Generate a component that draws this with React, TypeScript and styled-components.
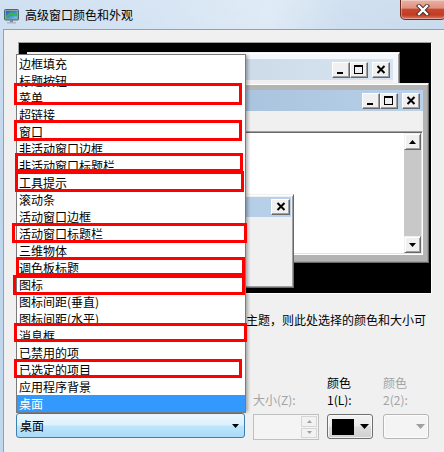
import React from "react";
import styled, { createGlobalStyle } from "styled-components";

const GlobalStyle = createGlobalStyle`
  html, body { margin: 0; padding: 0; background: #f0f0f0; }
  body { font-family: "Noto Sans CJK SC", "Noto Sans", sans-serif; font-size: 12px; color: #000; }
  * { box-sizing: border-box; }
`;

const Frame = styled.div`
  position: relative;
  width: 444px;
  height: 452px;
  overflow: hidden;
  display: flex;
  flex-direction: column;
  background:
    linear-gradient(180deg, rgba(255, 255, 255, 0.3) 0%, rgba(255, 255, 255, 0) 45%),
    linear-gradient(100deg, #bcd4ec 0%, #c6daef 30%, #d3e3f2 52%, #bdd3ea 66%, #b3cbe5 100%);
`;

const TitleBar = styled.div`
  height: 29px;
  flex: 0 0 29px;
  display: flex;
  align-items: flex-start;
`;

const AppIcon = styled.div`
  width: 16px;
  height: 16px;
  margin: 8px 0 0 4px;
`;

const TitleText = styled.div`
  margin: 6px 0 0 5px;
  line-height: 18px;
  font-size: 12px;
  color: #000;
  white-space: nowrap;
`;

const CloseButton = styled.div`
  margin-left: auto;
  margin-right: -2px;
  width: 46px;
  height: 20px;
  border: 1px solid #6b2b20;
  border-top: none;
  border-radius: 0 0 5px 5px;
  background: linear-gradient(180deg, #eab0a3 0%, #de9281 42%, #c8472e 50%, #c23b22 78%, #d77a63 100%);
  box-shadow: inset 0 0 0 1px rgba(255, 255, 255, 0.35);
  display: flex;
  align-items: center;
  justify-content: center;
`;

const Client = styled.div`
  flex: 1;
  margin-left: 3px;
  background: #f0f0f0;
  border-left: 1px solid #8fa1b6;
  border-top: 1px solid #8fa1b6;
  padding-top: 12px;
`;

const Preview = styled.div`
  position: relative;
  margin-left: 14px;
  width: 414px;
  height: 252px;
  background: #000;
  border: 1px solid;
  border-color: #a0a0a0 #ffffff #ffffff #a0a0a0;
  overflow: hidden;
`;

const Win = styled.div<{ $l: number; $t: number; $w: number; $h: number; $frame: string; $pad: string }>`
  position: absolute;
  left: ${(p) => p.$l}px;
  top: ${(p) => p.$t}px;
  width: ${(p) => p.$w}px;
  height: ${(p) => p.$h}px;
  background: ${(p) => p.$frame};
  border: 1px solid;
  border-color: #f0f0f0 #696969 #696969 #f0f0f0;
  box-shadow: inset 1px 1px #ffffff, inset -1px -1px #a0a0a0;
  padding: ${(p) => p.$pad};
  display: flex;
  flex-direction: column;
`;

const Caption = styled.div<{ $from: string; $to: string; $h: number; $pr: number }>`
  height: ${(p) => p.$h}px;
  flex: 0 0 ${(p) => p.$h}px;
  background: linear-gradient(90deg, ${(p) => p.$from}, ${(p) => p.$to});
  display: flex;
  align-items: center;
  justify-content: flex-end;
  padding-right: ${(p) => p.$pr}px;
`;

const CapButton = styled.div<{ $gap?: number; $w?: number }>`
  width: ${(p) => p.$w ?? 18}px;
  height: 16px;
  margin-left: ${(p) => p.$gap ?? 0}px;
  background: #f0f0f0;
  border: 1px solid;
  border-color: #ffffff #696969 #696969 #ffffff;
  box-shadow: inset -1px -1px #a0a0a0;
  display: flex;
  align-items: center;
  justify-content: center;
`;

const MenuBand = styled.div`
  height: 20px;
  flex: 0 0 20px;
  background: #f0f0f0;
`;

const TextPane = styled.div`
  height: 124px;
  flex: 0 0 124px;
  background: #ffffff;
  border: 1px solid;
  border-color: #a0a0a0 #ffffff #ffffff #a0a0a0;
  box-shadow: inset 1px 1px #696969, inset -1px -1px #e3e3e3;
  padding: 1px;
  display: flex;
  justify-content: flex-end;
`;

const ScrollBar = styled.div`
  width: 17px;
  display: flex;
  flex-direction: column;
  background: #c8c8c8;
`;

const ScrollButton = styled.div`
  width: 17px;
  height: 17px;
  background: #f0f0f0;
  border: 1px solid;
  border-color: #f0f0f0 #696969 #696969 #f0f0f0;
  box-shadow: inset 1px 1px #ffffff, inset -1px -1px #a0a0a0;
  display: flex;
  align-items: center;
  justify-content: center;
`;

const ScrollTrack = styled.div`
  flex: 1;
`;

const MsgBody = styled.div`
  flex: 1;
  background: #f0f0f0;
`;

const Description = styled.div`
  margin-top: 18px;
  padding-left: 242px;
  height: 16px;
  line-height: 16px;
  font-size: 12px;
  white-space: nowrap;
`;

const ControlsRow = styled.div`
  margin-top: 46px;
  padding-left: 12px;
  display: flex;
  align-items: flex-start;
`;

const ItemColumn = styled.div`
  width: 229px;
  padding-top: 39px;
`;

const FieldColumn = styled.div<{ $w: number; $gap: number }>`
  width: ${(p) => p.$w}px;
  margin-left: ${(p) => p.$gap}px;
  display: flex;
  flex-direction: column;
`;

const LabelStack = styled.div<{ $disabled?: boolean }>`
  height: 34px;
  display: flex;
  flex-direction: column;
  justify-content: flex-end;
  color: ${(p) => (p.$disabled ? "#a3a3a3" : "#000")};
  font-size: 12px;
`;

const LabelLine = styled.div`
  line-height: 17px;
  height: 17px;
  white-space: nowrap;
`;

const Combo = styled.div`
  height: 25px;
  border: 1px solid #3c7fb1;
  border-radius: 3px;
  background: linear-gradient(180deg, #ecf7fd 0%, #dbf1fc 48%, #bee6fd 52%, #a9dbf6 100%);
  display: flex;
  align-items: center;
  justify-content: space-between;
  padding: 0 5px 0 3px;
  font-size: 12px;
`;

const Spinner = styled.div`
  margin-top: 6px;
  height: 26px;
  border: 1px solid #bfbfbf;
  background: #f4f4f4;
  display: flex;
  justify-content: flex-end;
  padding: 1px;
`;

const SpinColumn = styled.div`
  width: 16px;
  display: flex;
  flex-direction: column;
  gap: 1px;
`;

const SpinHalf = styled.div`
  flex: 1;
  border: 1px solid #d6d6d6;
  background: #f2f2f2;
  display: flex;
  align-items: center;
  justify-content: center;
`;

const ColorButton = styled.div<{ $disabled?: boolean }>`
  margin-top: 6px;
  height: 25px;
  border: 1px solid ${(p) => (p.$disabled ? "#b5b5b5" : "#707070")};
  border-radius: 3px;
  background: ${(p) =>
    p.$disabled
      ? "#f4f4f4"
      : "linear-gradient(180deg, #f2f2f2 0%, #ebebeb 48%, #dddddd 52%, #cfcfcf 100%)"};
  box-shadow: inset 0 0 0 1px rgba(255, 255, 255, 0.7);
  display: flex;
  align-items: center;
  padding: 0 3px 0 4px;
  justify-content: space-between;
`;

const Swatch = styled.div`
  width: 22px;
  height: 16px;
  background: #000;
`;

const DropList = styled.div`
  position: absolute;
  left: 16px;
  top: 54px;
  width: 230px;
  height: 359px;
  background: #fff;
  border: 1px solid #7a7a7a;
  box-shadow: 3px 0 3px -1px rgba(0, 0, 0, 0.3);
  z-index: 5;
`;

const ListItem = styled.div<{ $selected?: boolean }>`
  height: 17px;
  line-height: 17px;
  padding-left: 2px;
  font-size: 12px;
  white-space: nowrap;
  background: ${(p) => (p.$selected ? "#3399ff" : "transparent")};
  color: ${(p) => (p.$selected ? "#fff" : "#000")};
`;

const RedMark = styled.div<{ $l: number; $t: number; $w: number; $h: number }>`
  position: absolute;
  left: ${(p) => p.$l}px;
  top: ${(p) => p.$t}px;
  width: ${(p) => p.$w}px;
  height: ${(p) => p.$h}px;
  border: 3px solid #ff0000;
  z-index: 10;
  pointer-events: none;
`;

const items = [
  "边框填充",
  "标题按钮",
  "菜单",
  "超链接",
  "窗口",
  "非活动窗口边框",
  "非活动窗口标题栏",
  "工具提示",
  "滚动条",
  "活动窗口边框",
  "活动窗口标题栏",
  "三维物体",
  "调色板标题",
  "图标",
  "图标间距(垂直)",
  "图标间距(水平)",
  "消息框",
  "已禁用的项",
  "已选定的项目",
  "应用程序背景",
  "桌面",
];

const marks: [number, number, number, number][] = [
  [14, 83, 242, 105],
  [14, 120, 242, 141],
  [15, 153, 243, 172],
  [15, 171, 244, 192],
  [12, 223, 247, 243],
  [16, 257, 245, 276],
  [13, 275, 245, 295],
  [14, 323, 247, 342],
  [14, 359, 242, 378],
];

const MonitorIcon = () => (
  <svg width="16" height="16" viewBox="0 0 16 16">
    <defs>
      <linearGradient id="scr" x1="0" y1="0" x2="1" y2="1">
        <stop offset="0" stopColor="#2a62c9" />
        <stop offset="0.5" stopColor="#2f8fd8" />
        <stop offset="1" stopColor="#6fd0e8" />
      </linearGradient>
    </defs>
    <rect x="0.5" y="1.5" width="14" height="10.5" rx="1" fill="#8f9dab" stroke="#56626e" strokeWidth="1" />
    <rect x="2" y="3" width="11" height="7.5" fill="url(#scr)" />
    <polygon points="2,8 7,4 13,6 13,8.5 7,6.5 2,10.5" fill="#3fb24a" />
    <rect x="6" y="12" width="3" height="2" fill="#7d8995" />
    <rect x="3" y="14" width="9" height="1.5" fill="#a9b4bf" />
  </svg>
);

const CloseGlyph = () => (
  <svg width="14" height="12" viewBox="0 0 14 12">
    <path d="M3 2 L11 10 M11 2 L3 10" stroke="#4a2a25" strokeWidth="4.2" strokeLinecap="square" />
    <path d="M3 2 L11 10 M11 2 L3 10" stroke="#ffffff" strokeWidth="2.4" strokeLinecap="square" />
  </svg>
);

type GlyphKind = "min" | "max" | "close";
const CapGlyph = ({ kind }: { kind: GlyphKind }) => (
  <svg width="16" height="14" viewBox="0 0 16 14" shapeRendering="crispEdges">
    {kind === "min" && <rect x="4" y="9" width="6" height="2" fill="#000" />}
    {kind === "max" && (
      <g fill="#000">
        <rect x="3" y="2" width="9" height="2" />
        <rect x="3" y="2" width="1" height="9" />
        <rect x="11" y="2" width="1" height="9" />
        <rect x="3" y="10" width="9" height="1" />
      </g>
    )}
    {kind === "close" && (
      <path d="M4.5 3 L11.5 10 M11.5 3 L4.5 10" stroke="#000" strokeWidth="2" shapeRendering="auto" />
    )}
  </svg>
);

const Tri = ({ dir, w, h, color }: { dir: "up" | "down"; w: number; h: number; color: string }) => (
  <svg width={w} height={h} viewBox={`0 0 ${w} ${h}`}>
    {dir === "up" ? (
      <polygon points={`0,${h} ${w},${h} ${w / 2},0`} fill={color} />
    ) : (
      <polygon points={`0,0 ${w},0 ${w / 2},${h}`} fill={color} />
    )}
  </svg>
);

export default function App() {
  return (
    <>
      <GlobalStyle />
      <Frame>
        <TitleBar>
          <AppIcon>
            <MonitorIcon />
          </AppIcon>
          <TitleText>高级窗口颜色和外观</TitleText>
          <CloseButton>
            <CloseGlyph />
          </CloseButton>
        </TitleBar>
        <Client>
          <Preview>
            <Win $l={8} $t={9} $w={373} $h={150} $frame="#f4f7fc" $pad="6px">
              <Caption $from="#bfcddb" $to="#d7e4f2" $h={21} $pr={3}>
                <CapButton>
                  <CapGlyph kind="min" />
                </CapButton>
                <CapButton>
                  <CapGlyph kind="max" />
                </CapButton>
                <CapButton $gap={4}>
                  <CapGlyph kind="close" />
                </CapButton>
              </Caption>
              <MenuBand />
            </Win>
            <Win $l={18} $t={40} $w={392} $h={180} $frame="#b4b4b4" $pad="6px 5px 7px 6px">
              <Caption $from="#99b4d1" $to="#b9d1ea" $h={21} $pr={3}>
                <CapButton>
                  <CapGlyph kind="min" />
                </CapButton>
                <CapButton>
                  <CapGlyph kind="max" />
                </CapButton>
                <CapButton $gap={4}>
                  <CapGlyph kind="close" />
                </CapButton>
              </Caption>
              <MenuBand />
              <TextPane>
                <ScrollBar>
                  <ScrollButton>
                    <Tri dir="up" w={7} h={4} color="#000" />
                  </ScrollButton>
                  <ScrollTrack />
                  <ScrollButton>
                    <Tri dir="down" w={7} h={4} color="#000" />
                  </ScrollButton>
                </ScrollBar>
              </TextPane>
            </Win>
            <Win $l={91} $t={151} $w={184} $h={94} $frame="#f0f0f0" $pad="2px">
              <Caption $from="#a9c4e0" $to="#b9d1ea" $h={20} $pr={1}>
                <CapButton $w={19}>
                  <CapGlyph kind="close" />
                </CapButton>
              </Caption>
              <MsgBody />
            </Win>
          </Preview>
          <Description>主题，则此处选择的颜色和大小可</Description>
          <ControlsRow>
            <ItemColumn>
              <Combo>
                <span>桌面</span>
                <Tri dir="down" w={7} h={4} color="#000" />
              </Combo>
            </ItemColumn>
            <FieldColumn $w={66} $gap={8}>
              <LabelStack $disabled>
                <LabelLine>大小(Z):</LabelLine>
              </LabelStack>
              <Spinner>
                <SpinColumn>
                  <SpinHalf>
                    <Tri dir="up" w={5} h={3} color="#a0a0a0" />
                  </SpinHalf>
                  <SpinHalf>
                    <Tri dir="down" w={5} h={3} color="#a0a0a0" />
                  </SpinHalf>
                </SpinColumn>
              </Spinner>
            </FieldColumn>
            <FieldColumn $w={46} $gap={8}>
              <LabelStack>
                <LabelLine>颜色</LabelLine>
                <LabelLine>1(L):</LabelLine>
              </LabelStack>
              <ColorButton>
                <Swatch />
                <Tri dir="down" w={9} h={5} color="#000" />
              </ColorButton>
            </FieldColumn>
            <FieldColumn $w={46} $gap={10}>
              <LabelStack $disabled>
                <LabelLine>颜色</LabelLine>
                <LabelLine>2(2):</LabelLine>
              </LabelStack>
              <ColorButton $disabled>
                <span />
                <Tri dir="down" w={9} h={5} color="#a0a0a0" />
              </ColorButton>
            </FieldColumn>
          </ControlsRow>
        </Client>
        <DropList>
          {items.map((it) => (
            <ListItem key={it} $selected={it === "桌面"}>
              {it}
            </ListItem>
          ))}
        </DropList>
        {marks.map(([l, t, r, b], i) => (
          <RedMark key={i} $l={l} $t={t} $w={r - l} $h={b - t} />
        ))}
      </Frame>
    </>
  );
}
